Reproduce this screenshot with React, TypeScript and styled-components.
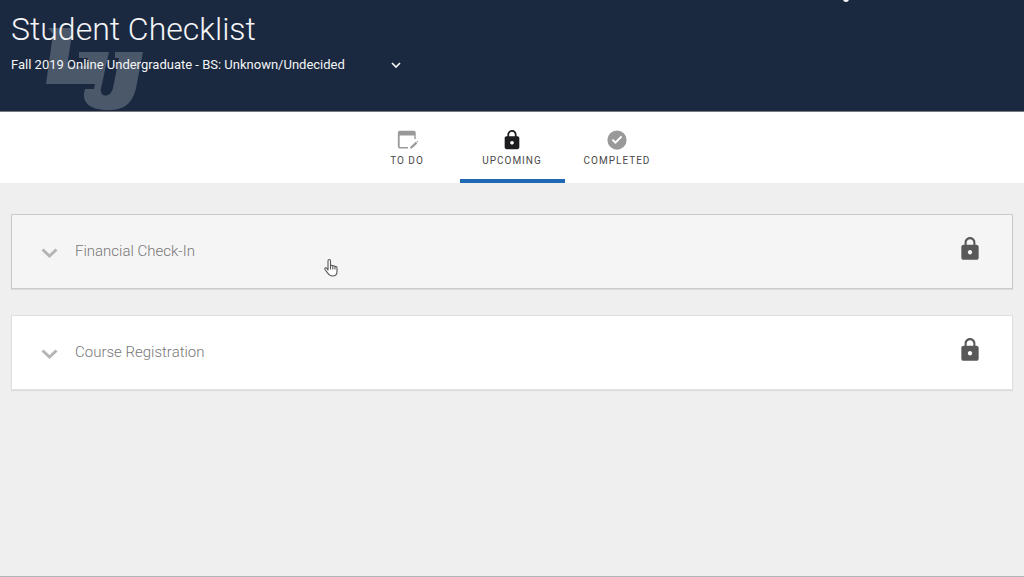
import React, { useState } from "react";
import styled, { createGlobalStyle } from "styled-components";

const GlobalStyle = createGlobalStyle`
  *, *::before, *::after { box-sizing: border-box; }
  body {
    margin: 0;
    background: #efefef;
    font-family: Roboto, "Liberation Sans", sans-serif;
  }
`;

const Page = styled.div`
  display: flex;
  flex-direction: column;
  min-height: 100vh;
  border-bottom: 1px solid #b4b4b4;
`;

const Header = styled.header`
  position: relative;
  padding: 8px 11px 38px;
  background: #1b2940;
  border-bottom: 1px solid #777a80;
  color: #f4f5f6;
  overflow: hidden;
`;

const Watermark = styled.svg`
  position: absolute;
  left: 44px;
  top: 26px;
  width: 102px;
  height: 86px;
  fill: #4b586a;
`;

const LoaderDot = styled.span`
  position: absolute;
  left: 843px;
  top: -4px;
  width: 6px;
  height: 6px;
  border-radius: 50%;
  background: #f4f5f6;
`;

const Title = styled.h1`
  position: relative;
  margin: 0 0 7px;
  font-size: 32px;
  line-height: 42px;
  font-weight: 300;
`;

const ProgramPicker = styled.label`
  position: relative;
  display: flex;
  align-items: center;
  width: 390px;
  height: 16px;
`;

const ProgramSelect = styled.select`
  appearance: none;
  width: 100%;
  margin: 0;
  padding: 0;
  border: 0;
  background: transparent;
  color: inherit;
  font-family: inherit;
  font-size: 13px;
  line-height: 16px;
  cursor: pointer;
  option { color: #222; }
`;

const PickerArrow = styled.svg`
  flex: none;
  width: 10px;
  height: 6px;
  margin-left: -10px;
  fill: none;
  stroke: currentColor;
  stroke-width: 1.7;
  pointer-events: none;
`;

const Tabs = styled.nav`
  display: flex;
  justify-content: center;
  height: 71px;
  background: #fff;
`;

const Tab = styled.button<{ $active: boolean }>`
  display: flex;
  flex-direction: column;
  align-items: center;
  gap: 3px;
  width: 105px;
  padding: 17px 0 0;
  border: 0;
  border-bottom: 4px solid ${(p) => (p.$active ? "#1f68b3" : "transparent")};
  background: none;
  color: ${(p) => (p.$active ? "#1d1d1f" : "#999")};
  font-family: inherit;
  cursor: pointer;
`;

const TabIcon = styled.svg`
  width: 22px;
  height: 22px;
  fill: currentColor;
`;

const TabLabel = styled.span`
  color: #4a4a4a;
  font-size: 10px;
  line-height: 14px;
  letter-spacing: 1px;
`;

const List = styled.main`
  flex: 1;
  display: flex;
  flex-direction: column;
  gap: 26px;
  padding: 31px 11px;
`;

const Item = styled.button<{ $hovered: boolean }>`
  position: relative;
  display: flex;
  align-items: center;
  width: 100%;
  height: 75px;
  padding: 0 29px 2px;
  border: 1px solid ${(p) => (p.$hovered ? "#cbcbcb" : "#e0e0e0")};
  background: ${(p) => (p.$hovered ? "#f5f5f5" : "#fff")};
  box-shadow: 0 1px 1px rgba(0, 0, 0, 0.07);
  font-family: inherit;
  text-align: left;
  cursor: pointer;
`;

const ItemArrow = styled.svg`
  width: 17px;
  height: 10px;
  margin: 4px 17px 0 0;
  fill: none;
  stroke: #b5b5b5;
  stroke-width: 3;
`;

const ItemName = styled.span`
  flex: 1;
  color: #777;
  font-size: 15px;
  line-height: 20px;
  font-weight: 300;
`;

const ItemLock = styled.svg`
  width: 26px;
  height: 28px;
  margin-bottom: 4px;
  fill: #585858;
`;

const Pointer = styled.svg`
  position: absolute;
  left: 311px;
  top: 43px;
  width: 16px;
  height: 20px;
  fill: #fff;
  stroke: #555;
  stroke-width: 1.1;
  stroke-linejoin: round;
  stroke-linecap: round;
  pointer-events: none;
`;

const LOCK =
  "M18 8h-1V6c0-2.760-2.240-5-5-5S7 3.240 7 6v2H6c-1.100 0-2 .9-2 2v10c0 1.100.9 2 2 2h12c1.100 0 2-.9 2-2V10c0-1.100-.9-2-2-2zm-6 9c-1.100 0-2-.9-2-2s.9-2 2-2 2 .9 2 2-.9 2-2 2zm3.100-9H8.900V6c0-1.710 1.390-3.100 3.100-3.100s3.100 1.390 3.100 3.100v2z";

const tabs = [
  {
    name: "TO DO",
    icon: (
      <path d="M4 2h15.500a2 2 0 0 1 2 2v7h-1.500V7h-16v12.500H13v1.700H4a2 2 0 0 1-2-2V4a2 2 0 0 1 2-2zM15.500 19.600l6-5.600 1.700 1.700-6 5.600h-1.700zM22.200 13.400l.8-.7 1.500 1.500-.8.900z" />
    ),
  },
  { name: "UPCOMING", icon: <path d={LOCK} /> },
  {
    name: "COMPLETED",
    icon: (
      <path d="M12 1.500a10.500 10.500 0 1 0 0 21 10.500 10.500 0 0 0 0-21zm-1.700 14.800-4-4 1.500-1.500 2.500 2.500 6-6 1.500 1.500z" />
    ),
  },
];

const items = ["Financial Check-In", "Course Registration"];

export default function App() {
  const [active, setActive] = useState("UPCOMING");

  return (
    <Page>
      <GlobalStyle />
      <Header>
        <Watermark viewBox="44 26 102 86" aria-hidden="true">
          <path d="M48 28H73L67 66H86L88 58H79V52H109L101 88C99 98 111 98 113 88L119 58H115V52H143L136 88C132 106 121 111 105 110C89 109 81 102 85 89H94L95 84H46L53 34Z" />
        </Watermark>
        <LoaderDot />
        <Title>Student Checklist</Title>
        <ProgramPicker>
          <ProgramSelect aria-label="Program">
            <option>Fall 2019 Online Undergraduate - BS: Unknown/Undecided</option>
          </ProgramSelect>
          <PickerArrow viewBox="0 0 10 6" aria-hidden="true">
            <path d="M1 1l4 4 4-4" />
          </PickerArrow>
        </ProgramPicker>
      </Header>
      <Tabs>
        {tabs.map((tab) => (
          <Tab
            key={tab.name}
            $active={tab.name === active}
            onClick={() => setActive(tab.name)}
          >
            <TabIcon viewBox="0 0 24 24" aria-hidden="true">
              {tab.icon}
            </TabIcon>
            <TabLabel>{tab.name}</TabLabel>
          </Tab>
        ))}
      </Tabs>
      <List>
        {items.map((name, index) => (
          <Item key={name} $hovered={index === 0}>
            <ItemArrow viewBox="0 0 17 10" aria-hidden="true">
              <path d="M1.500 1.500l7 6.500 7-6.500" />
            </ItemArrow>
            <ItemName>{name}</ItemName>
            <ItemLock viewBox="0 0 24 24" aria-hidden="true">
              <path d={LOCK} />
            </ItemLock>
            {index === 0 && (
              <Pointer viewBox="0 0 16 20" aria-hidden="true">
                <path d="M5 11V3c0-2 2.500-2 2.500 0v5c.3-1.200 2.300-1 2.300.3.400-.9 2.200-.6 2.200.6.500-.7 2-.4 2 .9v3.700c0 3-1.500 4.500-4.500 4.500-3 0-4-1.500-5-3.200L2 11.500c-.8-1.500.8-2.300 1.700-1.300L5 12zM7.500 8v3M9.800 8.500V11M12 9v2" />
              </Pointer>
            )}
          </Item>
        ))}
      </List>
    </Page>
  );
}
